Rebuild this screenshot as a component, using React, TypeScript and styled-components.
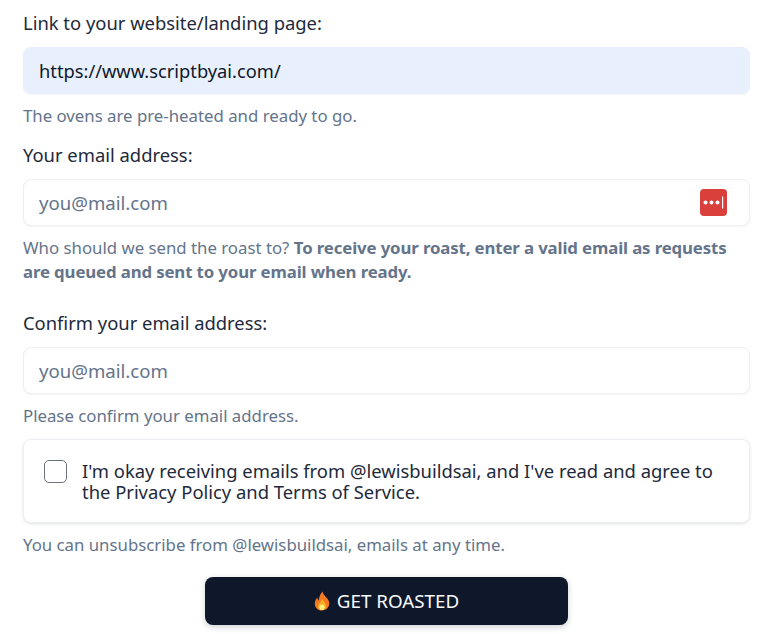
import React, { FC } from 'react';
import styled, { createGlobalStyle } from 'styled-components';

const GlobalStyle = createGlobalStyle`
  html, body {
    margin: 0;
    padding: 0;
    background: #ffffff;
    font-family: 'Noto Sans', 'Open Sans', sans-serif;
  }
  * {
    box-sizing: border-box;
  }
`;

const PasswordManagerIcon: FC = () => (
  <svg width="27" height="27" viewBox="0 0 27 27" aria-hidden="true">
    <rect width="27" height="27" rx="4" fill="#d9403c" />
    <circle cx="5.5" cy="13.5" r="2" fill="#fff" />
    <circle cx="11.5" cy="13.5" r="2" fill="#fff" />
    <circle cx="17.5" cy="13.5" r="2" fill="#fff" />
    <rect x="22" y="7.5" width="1.2" height="12" fill="#fff" />
  </svg>
);

const FlameIcon: FC = () => (
  <svg width="16" height="20" viewBox="0 0 16 20" aria-hidden="true">
    <path
      d="M8.5 0.5C9 4 13 6 14.8 10C16.5 14.5 13.5 19.5 8 19.5C3 19.5 0 15.5 1 11C1.5 9 2.5 7.5 3.2 6.6C3.5 8 4 9 5 9.5C4.8 6 6.5 2.5 8.5 0.5Z"
      fill="#f4791f"
    />
    <path
      d="M8.5 8C9 10.5 12 12 12 15C12 17.5 10.3 19 8 19C5.7 19 4 17.5 4 15.3C4 13 7 11 8.5 8Z"
      fill="#fbb024"
    />
    <ellipse cx="8" cy="16.2" rx="2.6" ry="2.8" fill="#fdee7a" />
  </svg>
);

const App: FC = () => (
  <Page>
    <GlobalStyle />
    <Field>
      <Label>Link to your website/landing page:</Label>
      <Input type="text" defaultValue="https://www.scriptbyai.com/" filled />
      <Help>The ovens are pre-heated and ready to go.</Help>
    </Field>

    <Field>
      <Label>Your email address:</Label>
      <InputWrap>
        <Input type="email" placeholder="you@mail.com" />
        <InputBadge>
          <PasswordManagerIcon />
        </InputBadge>
      </InputWrap>
      <Help>
        Who should we send the roast to?{' '}
        <strong>
          To receive your roast, enter a valid email as requests are queued and
          sent to your email when ready.
        </strong>
      </Help>
    </Field>

    <Field spaced>
      <Label>Confirm your email address:</Label>
      <Input type="email" placeholder="you@mail.com" />
      <Help>Please confirm your email address.</Help>
    </Field>

    <ConsentCard>
      <Checkbox type="checkbox" />
      <ConsentText>
        I'm okay receiving emails from @lewisbuildsai, and I've read and agree
        to the Privacy Policy and Terms of Service.
      </ConsentText>
    </ConsentCard>
    <Help>You can unsubscribe from @lewisbuildsai, emails at any time.</Help>

    <SubmitRow>
      <SubmitButton type="button">
        <FlameIcon />
        GET ROASTED
      </SubmitButton>
    </SubmitRow>
  </Page>
);

const Page = styled.div`
  display: flex;
  flex-direction: column;
  width: 768px;
  height: 642px;
  overflow: hidden;
  padding: 10px 18px 0 23px;
`;

const Field = styled.div<{ spaced?: boolean }>`
  display: flex;
  flex-direction: column;
  margin-top: ${(props) => (props.spaced ? '12px' : '0')};
  margin-bottom: ${(props) => (props.spaced ? '11px' : '14px')};
`;

const Label = styled.label`
  font-size: 18.4px;
  line-height: 26px;
  color: #1e293b;
  margin-bottom: 11px;
`;

const InputWrap = styled.div`
  position: relative;
`;

const Input = styled.input<{ filled?: boolean }>`
  display: block;
  width: 100%;
  height: 47px;
  padding: 0 15px;
  border-radius: 8px;
  border: 1px solid ${(props) => (props.filled ? '#e8f0fe' : '#eceff3')};
  background: ${(props) => (props.filled ? '#e8f0fe' : '#ffffff')};
  box-shadow: 0 1px 2px rgba(15, 23, 42, 0.05);
  color: #0f172a;
  font-family: inherit;
  font-size: 18.3px;
  outline: none;

  &::placeholder {
    color: #64748b;
    opacity: 1;
    font-size: 18.6px;
  }
`;

const InputBadge = styled.div`
  position: absolute;
  top: 10px;
  right: 23px;
  display: flex;
`;

const Help = styled.p`
  margin: 10px 0 0;
  font-size: 16.8px;
  line-height: 24px;
  color: #64748b;

  strong {
    font-weight: 700;
    letter-spacing: -0.12px;
  }
`;

const ConsentCard = styled.div`
  display: flex;
  align-items: flex-start;
  gap: 15px;
  height: 84px;
  padding: 20px;
  border-radius: 8px;
  border: 1px solid #eceff3;
  background: #ffffff;
  box-shadow: 0 1px 3px rgba(15, 23, 42, 0.12);
`;

const Checkbox = styled.input`
  appearance: none;
  -webkit-appearance: none;
  flex: none;
  width: 23px;
  height: 23px;
  margin: 0;
  border: 1.5px solid #6b7280;
  border-radius: 5px;
  background: #ffffff;
`;

const ConsentText = styled.span`
  font-size: 18.4px;
  line-height: 21px;
  color: #1e293b;
`;

const SubmitRow = styled.div`
  display: flex;
  justify-content: center;
  margin-top: 20px;
`;

const SubmitButton = styled.button`
  display: flex;
  align-items: center;
  justify-content: center;
  gap: 7px;
  width: 363px;
  height: 48px;
  border: none;
  border-radius: 8px;
  background: #0f172a;
  box-shadow: 0 2px 6px rgba(15, 23, 42, 0.2);
  color: #f8fafc;
  font-family: inherit;
  font-size: 18.8px;
  cursor: pointer;
`;

export default App;
